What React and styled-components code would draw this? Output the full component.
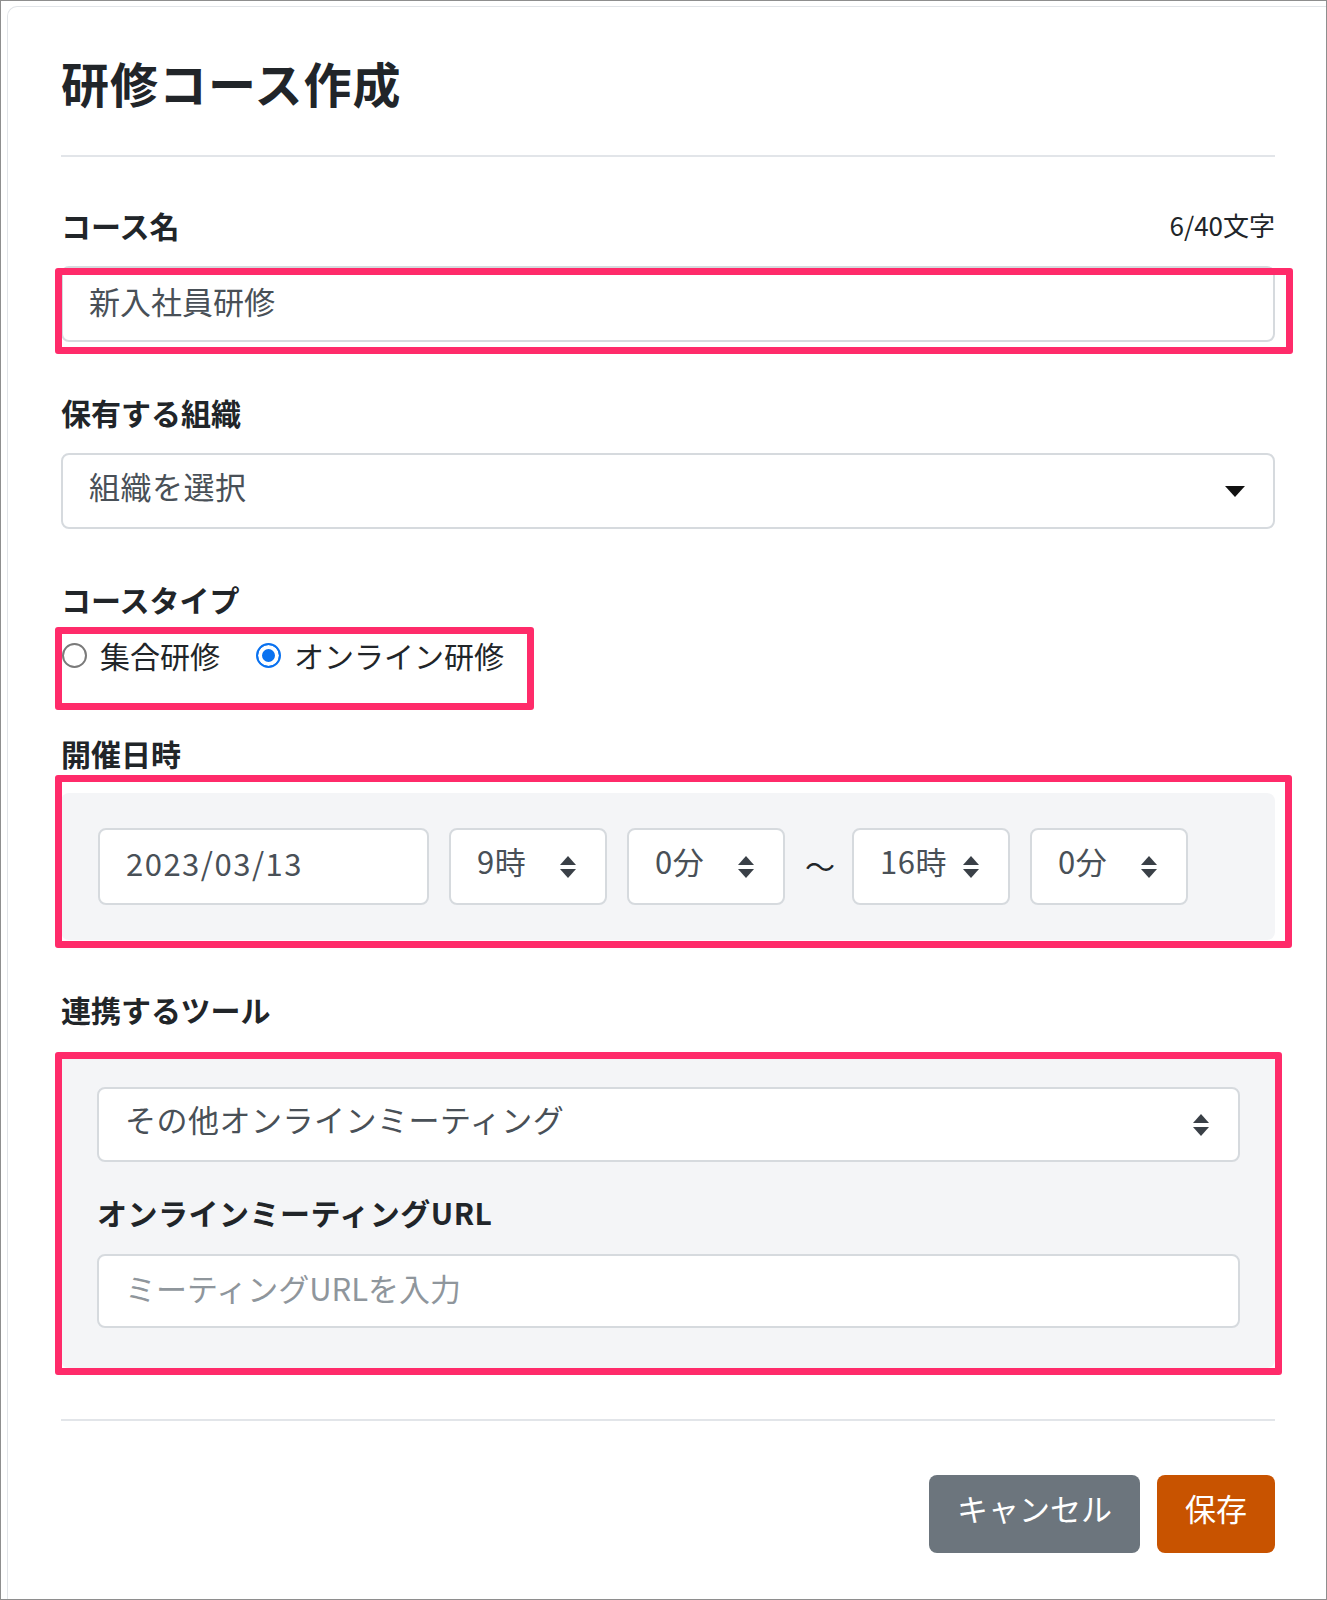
import React from "react";
import styled, { createGlobalStyle } from "styled-components";

const FONT = `"Noto Sans CJK JP", "Noto Sans", sans-serif`;

const GlobalStyle = createGlobalStyle`
  html, body { margin: 0; padding: 0; background: #fff; }
  body { font-family: ${FONT}; color: #212529; }
  *, *::before, *::after { box-sizing: border-box; }
`;

const Frame = styled.div`
  width: 1327px;
  height: 1600px;
  border: 1px solid #8e8e8e;
  padding: 5px 0 0 6px;
  overflow: hidden;
`;

const Modal = styled.div`
  height: 100%;
  border-top: 1px solid #e1e4e8;
  border-left: 1px solid #e1e4e8;
  border-top-left-radius: 10px;
  padding: 46px 51px 0 53px;
  display: flex;
  flex-direction: column;
`;

const Title = styled.h1`
  margin: 0;
  font-size: 48px;
  line-height: 58px;
  font-weight: 700;
  letter-spacing: 1px;
  color: #212529;
`;

const Divider = styled.hr`
  margin: ${(p) => p.$mt}px 0 0;
  border: 0;
  height: 2px;
  background: #e2e5e9;
`;

const Field = styled.section`
  margin-top: ${(p) => p.$mt}px;
  display: flex;
  flex-direction: column;
`;

const LabelRow = styled.div`
  display: flex;
  justify-content: space-between;
  align-items: center;
  height: 40px;
  margin-bottom: ${(p) => p.$gap}px;
`;

const Label = styled.label`
  font-size: 30px;
  line-height: 40px;
  font-weight: 700;
  color: #212529;
`;

const Counter = styled.span`
  font-size: 26px;
  line-height: 40px;
  color: #212529;
`;

const Marked = styled.div`
  position: relative;
`;

const Mark = styled.div`
  position: absolute;
  top: ${(p) => p.$top}px;
  left: ${(p) => p.$left}px;
  bottom: ${(p) => p.$bottom}px;
  ${(p) => (p.$width ? `width: ${p.$width}px;` : `right: ${p.$right}px;`)}
  border: 7px solid #ff2b6a;
  border-radius: 3px;
  pointer-events: none;
`;

const TextInput = styled.input`
  display: block;
  width: ${(p) => (p.$width ? `${p.$width}px` : "100%")};
  height: ${(p) => p.$h}px;
  border: 2px solid #d6dade;
  border-radius: 8px;
  background: #fff;
  padding: 0 26px 8px;
  font-family: ${FONT};
  font-size: 31px;
  letter-spacing: ${(p) => p.$ls || 0}px;
  color: #495057;
  outline: none;
  &::placeholder { color: #8f969c; }
`;

const SelectBox = styled.div`
  display: flex;
  align-items: center;
  justify-content: space-between;
  width: ${(p) => (p.$width ? `${p.$width}px` : "100%")};
  flex: none;
  height: ${(p) => p.$h}px;
  border: 2px solid #d6dade;
  border-radius: 8px;
  background: #fff;
  padding: 0 28px 0 26px;
  font-size: 31px;
  color: #495057;
  white-space: nowrap;
`;

const SelectText = styled.span`
  margin-bottom: 12px;
  letter-spacing: 0.5px;
`;

const RadioRow = styled.div`
  position: relative;
  display: flex;
  align-items: center;
  height: 40px;
  margin-top: 16px;
  padding-left: 1px;
  gap: 36px;
`;

const RadioOption = styled.label`
  display: flex;
  align-items: center;
  gap: 13px;
  font-size: 30px;
  line-height: 40px;
  color: #212529;
`;

const Radio = styled.input.attrs({ type: "radio" })`
  appearance: none;
  margin: 0;
  width: 25px;
  height: 25px;
  border-radius: 50%;
  border: 2px solid #7a7a7a;
  background: #fff;
  &:checked {
    border-color: #0a72f0;
    background: #0a72f0;
    box-shadow: inset 0 0 0 4px #fff;
  }
`;

const Panel = styled.div`
  background: #f4f5f7;
  border-radius: 8px;
  padding: ${(p) => p.$pad};
`;

const DateRow = styled.div`
  display: flex;
  align-items: center;
  gap: 20px;
`;

const Tilde = styled.span`
  width: 27px;
  text-align: center;
  font-size: 30px;
  color: #212529;
  margin-bottom: 4px;
`;

const SubLabel = styled.label`
  display: block;
  font-size: 30px;
  line-height: 40px;
  font-weight: 700;
  letter-spacing: 0.5px;
  color: #212529;
  margin: 30px 0 22px;
`;

const Footer = styled.div`
  display: flex;
  justify-content: flex-end;
  gap: 17px;
  margin-top: 54px;
`;

const Button = styled.button`
  height: 78px;
  padding: 0 28px 14px;
  border: 0;
  border-radius: 8px;
  background: ${(p) => (p.$primary ? "#c85300" : "#6c757d")};
  color: #fff;
  font-family: ${FONT};
  font-size: 31px;
`;

const CaretDown = () => (
  <svg width="20" height="11" viewBox="0 0 20 11">
    <path d="M0 0 L20 0 L10 11 Z" fill="#111" />
  </svg>
);

const UpDown = () => (
  <svg width="18" height="22" viewBox="0 0 18 22">
    <path d="M9 0 L17 9 L1 9 Z" fill="#3a4047" />
    <path d="M1 13 L17 13 L9 22 Z" fill="#3a4047" />
  </svg>
);

const TimeSelect = ({ value }) => (
  <SelectBox $width={158} $h={77}>
    <SelectText>{value}</SelectText>
    <UpDown />
  </SelectBox>
);

export default function App() {
  return (
    <>
      <GlobalStyle />
      <Frame>
        <Modal>
          <Title>研修コース作成</Title>
          <Divider $mt={44} />

          <Field $mt={48}>
            <LabelRow $gap={21}>
              <Label>コース名</Label>
              <Counter>6/40文字</Counter>
            </LabelRow>
            <Marked>
              <TextInput $h={76} defaultValue="新入社員研修" />
              <Mark $top={2} $left={-6} $right={-18} $bottom={-12} />
            </Marked>
          </Field>

          <Field $mt={50}>
            <LabelRow $gap={21}>
              <Label>保有する組織</Label>
            </LabelRow>
            <SelectBox $h={76}>
              <SelectText>組織を選択</SelectText>
              <CaretDown />
            </SelectBox>
          </Field>

          <Field $mt={50}>
            <LabelRow $gap={0}>
              <Label>コースタイプ</Label>
            </LabelRow>
            <RadioRow>
              <RadioOption>
                <Radio name="type" />
                集合研修
              </RadioOption>
              <RadioOption>
                <Radio name="type" defaultChecked />
                オンライン研修
              </RadioOption>
              <Mark $top={-8} $left={-6} $width={479} $bottom={-35} />
            </RadioRow>
          </Field>

          <Field $mt={58}>
            <LabelRow $gap={20}>
              <Label>開催日時</Label>
            </LabelRow>
            <Marked>
              <Panel $pad="35px 37px">
                <DateRow>
                  <TextInput $width={331} $h={77} $ls={1.5} defaultValue="2023/03/13" />
                  <TimeSelect value="9時" />
                  <TimeSelect value="0分" />
                  <Tilde>～</Tilde>
                  <TimeSelect value="16時" />
                  <TimeSelect value="0分" />
                </DateRow>
              </Panel>
              <Mark $top={-18} $left={-6} $right={-17} $bottom={-8} />
            </Marked>
          </Field>

          <Field $mt={49}>
            <LabelRow $gap={25}>
              <Label>連携するツール</Label>
            </LabelRow>
            <Marked>
              <Panel $pad="33px 35px 40px 36px">
                <SelectBox $h={75}>
                  <SelectText>その他オンラインミーティング</SelectText>
                  <UpDown />
                </SelectBox>
                <SubLabel>オンラインミーティングURL</SubLabel>
                <TextInput $h={74} placeholder="ミーティングURLを入力" />
              </Panel>
              <Mark $top={-2} $left={-6} $right={-7} $bottom={-7} />
            </Marked>
          </Field>

          <Divider $mt={51} />

          <Footer>
            <Button>キャンセル</Button>
            <Button $primary>保存</Button>
          </Footer>
        </Modal>
      </Frame>
    </>
  );
}
